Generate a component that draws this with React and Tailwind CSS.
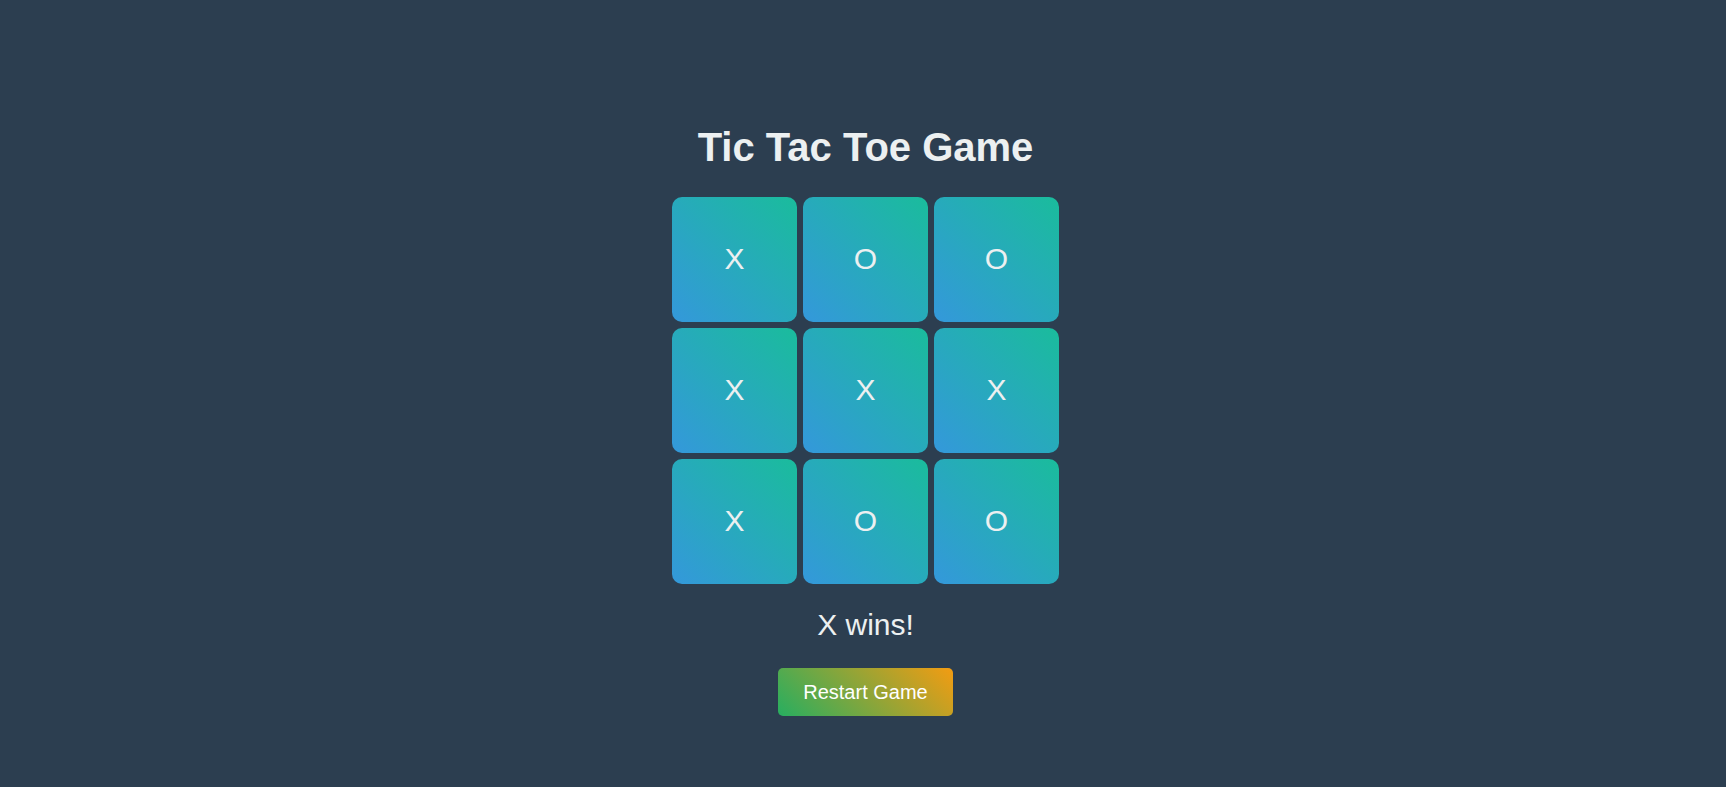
import { useState } from "react";

const START_BOARD = ["X", "O", "O", "X", "X", "X", "X", "O", "O"];

const LINES = [
  [0, 1, 2], [3, 4, 5], [6, 7, 8],
  [0, 3, 6], [1, 4, 7], [2, 5, 8],
  [0, 4, 8], [2, 4, 6],
];

function getWinner(board) {
  for (const [a, b, c] of LINES) {
    if (board[a] && board[a] === board[b] && board[a] === board[c]) return board[a];
  }
  return null;
}

export default function App() {
  const [board, setBoard] = useState(START_BOARD);
  const [turn, setTurn] = useState("X");

  const winner = getWinner(board);
  const full = board.every(Boolean);
  const status = winner ? `${winner} wins!` : full ? "It's a draw!" : `${turn}'s turn`;

  const handleClick = (i) => {
    if (board[i] || winner) return;
    const next = [...board];
    next[i] = turn;
    setBoard(next);
    setTurn(turn === "X" ? "O" : "X");
  };

  const restart = () => {
    setBoard(Array(9).fill(""));
    setTurn("X");
  };

  return (
    <div
      className="min-h-screen w-full bg-[#2c3e50] text-[#ecf0f1] flex flex-col items-center pl-[5px]"
      style={{ fontFamily: '"Liberation Sans", Arial, sans-serif' }}
    >
      <h1 className="mt-[124px] text-[40px] leading-[46px] font-bold">Tic Tac Toe Game</h1>

      <div className="mt-[27px] grid grid-cols-[repeat(3,125px)] gap-[6px]">
        {board.map((cell, i) => (
          <button
            key={i}
            onClick={() => handleClick(i)}
            className="w-[125px] h-[125px] pb-[3px] rounded-[10px] bg-[linear-gradient(45deg,#3498db,#1abc9c)] flex items-center justify-center text-[30px] text-[#ecf0f1] cursor-pointer"
          >
            {cell}
          </button>
        ))}
      </div>

      <p className="mt-[23px] text-[30px] leading-[35px]">{status}</p>

      <button
        onClick={restart}
        className="mt-[26px] w-[175px] h-[48px] rounded-[5px] bg-[linear-gradient(45deg,#27ae60,#f39c12)] text-white text-[20px] flex items-center justify-center cursor-pointer"
      >
        Restart Game
      </button>
    </div>
  );
}
